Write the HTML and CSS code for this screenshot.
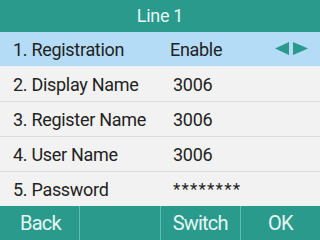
FILE: index.html
```html
<!DOCTYPE html>
<html lang="en">
<head>
    <meta charset="UTF-8">
    <title>Line 1</title>
    <link rel="stylesheet" href="styles.css">
</head>
<body>
    <!-- Title -->
    <header class="title">Line 1</header>

    <!-- Settings list -->
    <div class="list">
        <div class="row selected">
            <span class="label">1. Registration</span>
            <span class="value">Enable</span>
            <span class="arrows">
                <svg width="33" height="14" viewBox="0 0 33 14">
                    <polygon points="14,0 14,13 0,6.5" fill="#2a9a8c"/>
                    <polygon points="18,0 18,13 33,6.5" fill="#2a9a8c"/>
                </svg>
            </span>
        </div>
        <div class="row">
            <span class="label">2. Display Name</span>
            <span class="value">3006</span>
        </div>
        <div class="row">
            <span class="label">3. Register Name</span>
            <span class="value">3006</span>
        </div>
        <div class="row">
            <span class="label">4. User Name</span>
            <span class="value">3006</span>
        </div>
        <div class="row">
            <span class="label">5. Password</span>
            <span class="value stars">********</span>
        </div>
    </div>

    <!-- Softkeys -->
    <footer class="softkeys">
        <div class="key left">Back</div>
        <div class="key"></div>
        <div class="key">Switch</div>
        <div class="key">OK</div>
    </footer>
</body>
</html>
```

FILE: styles.css
```css
body {
    margin: 0;
    width: 320px;
    height: 240px;
    overflow: hidden;
    font-family: Roboto, "Liberation Sans", sans-serif;
    background-color: #f2f2f2;
    color: #222;
    display: flex;
    flex-direction: column;
}
.title {
    height: 32px;
    line-height: 32px;
    background-color: #2a9a8c;
    color: #e4f6f3;
    text-align: center;
    font-size: 18px;
    letter-spacing: -0.3px;
}
.list {
    display: flex;
    flex-direction: column;
}
.row {
    height: 34px;
    display: flex;
    align-items: center;
    border-bottom: 1px solid #dcdcdc;
    font-size: 18px;
    letter-spacing: -0.3px;
}
.row:last-child {
    border-bottom: none;
}
.row.selected {
    background-color: #b4dcf6;
    border-bottom-color: #e8eef2;
}
.label {
    width: 157px;
    padding-left: 13px;
}
.value {
    flex: 1;
    padding-left: 3px;
}
.selected .value {
    padding-left: 0;
}
.stars {
    letter-spacing: 1.2px;
    font-size: 17px;
}
.arrows {
    display: flex;
    align-items: center;
    padding-right: 12px;
}
.arrows svg {
    display: block;
}
.softkeys {
    flex: 1;
    display: flex;
    background-color: #2a9a8c;
    color: #e4f6f3;
    font-size: 20px;
    letter-spacing: -0.8px;
}
.key {
    width: 80px;
    display: flex;
    align-items: center;
    justify-content: center;
    border-left: 1px solid #5cbcb0;
}
.key:first-child {
    border-left: none;
}
.key.left {
    justify-content: flex-start;
    padding-left: 20px;
    box-sizing: border-box;
}
```
